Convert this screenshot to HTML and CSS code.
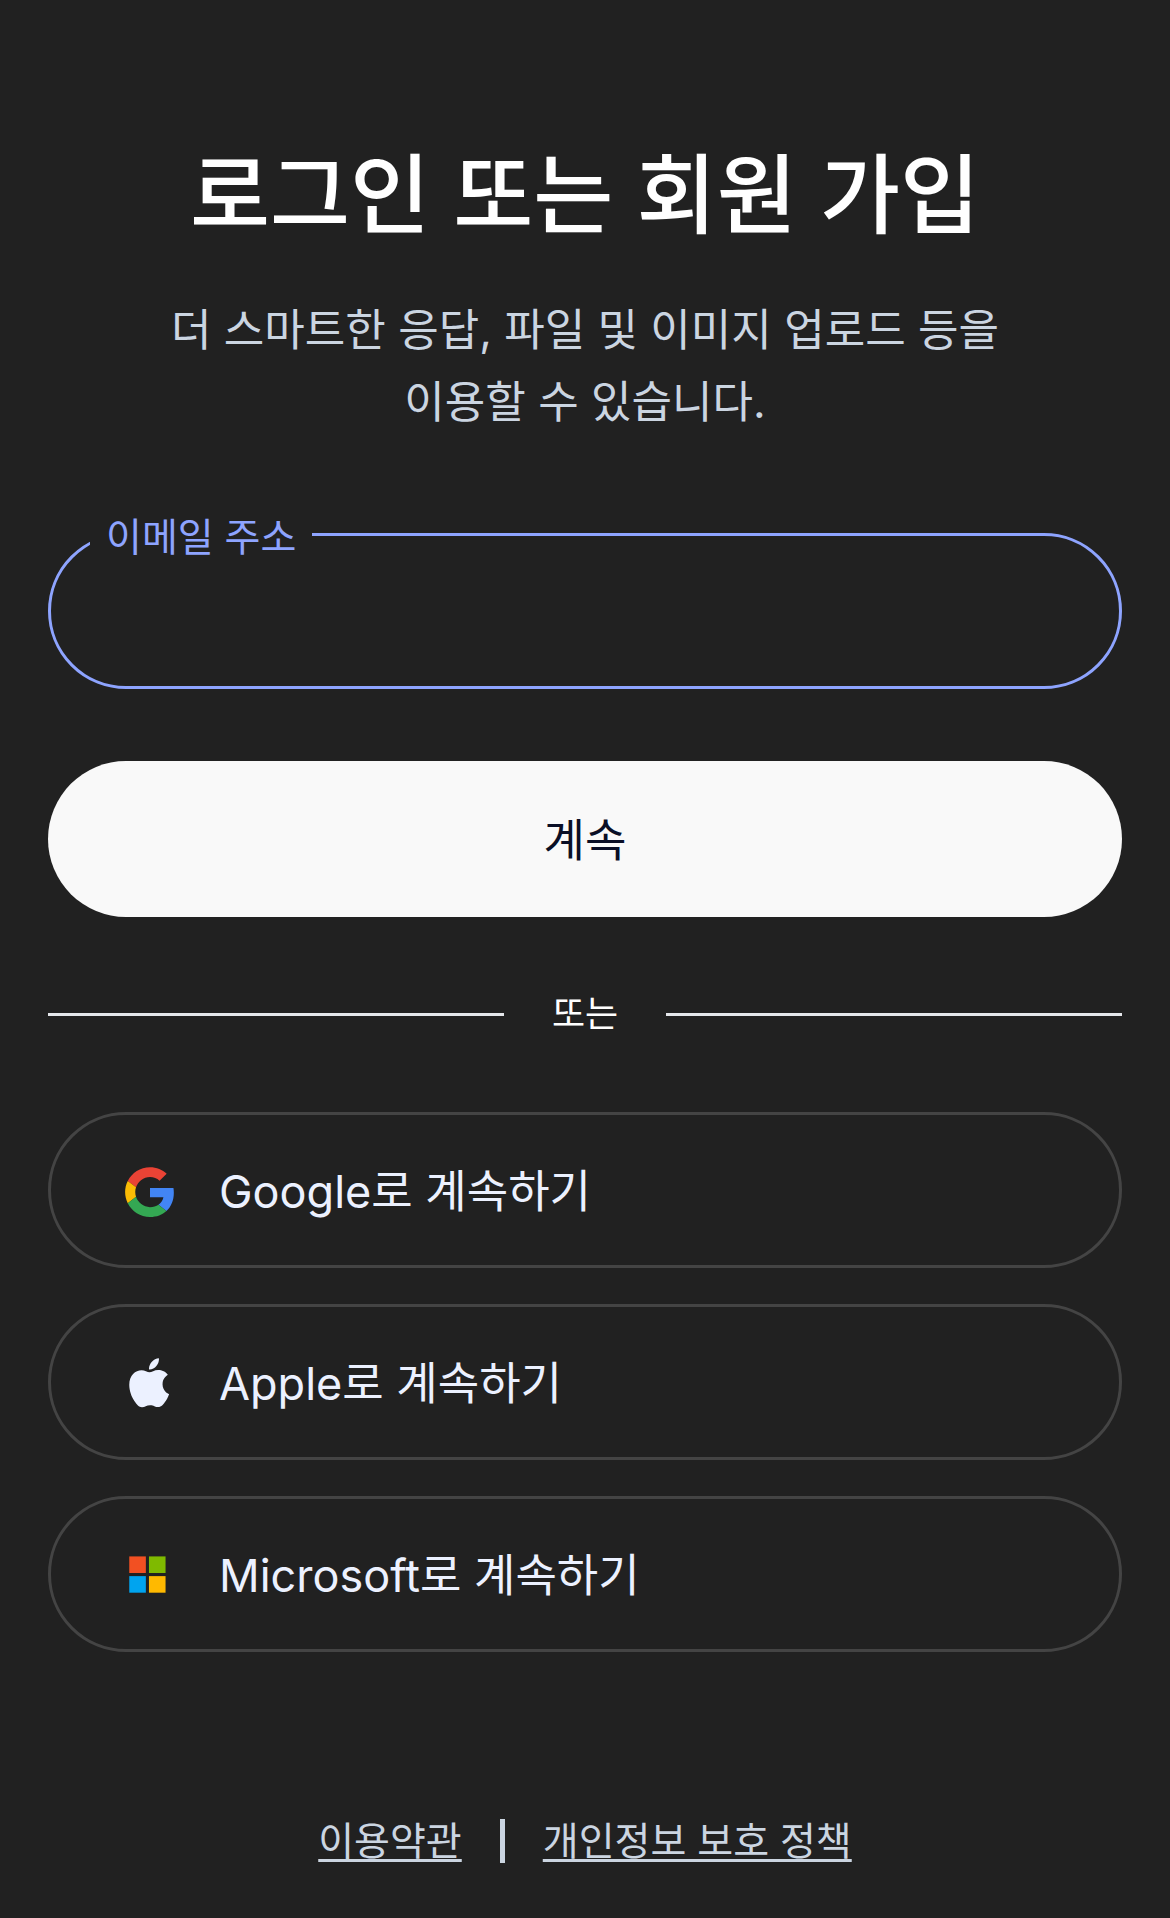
FILE: index.html
```html
<!DOCTYPE html>
<html lang="ko">
<head>
    <meta charset="UTF-8">
    <meta name="viewport" content="width=device-width, initial-scale=1.0">
    <title>로그인 또는 회원 가입</title>
    <link rel="stylesheet" href="styles.css">
</head>
<body>
    <main class="container">
        <h1>로그인 또는 회원 가입</h1>
        <p class="subtitle">더 스마트한 응답, 파일 및 이미지 업로드 등을 이용할 수 있습니다.</p>

        <form class="login-form">
            <div class="field">
                <label for="email">이메일 주소</label>
                <input type="email" id="email" name="email">
            </div>
            <button type="submit" class="btn-primary">계속</button>
        </form>

        <div class="divider"><span>또는</span></div>

        <div class="social">
            <button type="button" class="btn-social">
                <svg class="icon" viewBox="0 -6 48 54" aria-hidden="true">
                    <path fill="#EA4335" d="M24 9.5c3.54 0 6.71 1.22 9.21 3.6l6.85-6.85C35.9 2.38 30.47 0 24 0 14.62 0 6.51 5.38 2.56 13.22l7.98 6.19C12.43 13.72 17.74 9.5 24 9.5z"/>
                    <path fill="#4285F4" d="M46.98 24.55c0-1.57-.15-3.09-.38-4.55H24v9.02h12.94c-.58 2.96-2.26 5.48-4.78 7.18l7.73 6c4.51-4.18 7.09-10.36 7.09-17.65z"/>
                    <path fill="#FBBC05" d="M10.53 28.59c-.48-1.45-.76-2.99-.76-4.59s.27-3.14.76-4.59l-7.98-6.19C.92 16.46 0 20.12 0 24c0 3.88.92 7.54 2.56 10.78l7.97-6.19z"/>
                    <path fill="#34A853" d="M24 48c6.48 0 11.93-2.13 15.89-5.81l-7.73-6c-2.15 1.45-4.92 2.3-8.16 2.3-6.26 0-11.57-4.22-13.47-9.91l-7.98 6.19C6.51 42.62 14.62 48 24 48z"/>
                </svg>
                Google로 계속하기
            </button>
            <button type="button" class="btn-social">
                <svg class="icon" viewBox="0 -6 48 54" aria-hidden="true">
                    <path fill="#ECF1FF" transform="translate(4 -1) scale(.0472)" d="M788.1 340.9c-5.8 4.5-108.2 62.2-108.2 190.5 0 148.4 130.3 200.9 134.2 202.2-.6 3.2-20.7 71.9-68.7 141.9-42.8 61.6-87.5 123.1-155.5 123.1s-85.5-39.5-164-39.5c-76.5 0-103.7 40.8-165.9 40.8s-105.6-57-155.5-127C46.7 790.7 0 663 0 541.8c0-194.4 126.4-297.5 250.8-297.5 66.1 0 121.2 43.4 162.7 43.4 39.5 0 101.1-46 176.3-46 28.5 0 130.9 2.6 198.3 99.2zm-234-181.5c31.1-36.9 53.1-88.1 53.1-139.3 0-7.1-.6-14.3-1.9-20.1-50.6 1.9-110.8 33.7-147.1 75.8-28.5 32.4-55.1 83.6-55.1 135.5 0 7.8 1.3 15.6 1.9 18.1 3.2.6 8.4 1.3 13.6 1.3 45.4 0 102.5-30.4 135.5-71.3z"/>
                </svg>
                Apple로 계속하기
            </button>
            <button type="button" class="btn-social">
                <svg class="icon" viewBox="0 -6 48 54" aria-hidden="true">
                    <path fill="#F25022" d="M4 5h16v16H4z"/>
                    <path fill="#7FBA00" d="M23 5h16v16H23z"/>
                    <path fill="#00A4EF" d="M4 24h16v16H4z"/>
                    <path fill="#FFB900" d="M23 24h16v16H23z"/>
                </svg>
                Microsoft로 계속하기
            </button>
        </div>
    </main>

    <footer class="footer">
        <a href="#">이용약관</a>
        <span class="separator"></span>
        <a href="#">개인정보 보호 정책</a>
    </footer>
</body>
</html>
```

FILE: styles.css
```css
:root {
    --background: #212121;
    --text: #ecf1ff;
    --muted: #cbd5e1;
    --accent: #8ea4ff;
    --border: #444;
}

* {
    box-sizing: border-box;
    font-family: Inter, "Noto Sans CJK KR", sans-serif;
}

body {
    background: var(--background);
    color: var(--text);
    margin: 0;
    padding: 132px 48px 40px;
    min-height: 100vh;
}

h1 {
    color: white;
    text-align: center;
    font-size: 87px;
    font-weight: 500;
    line-height: 128px;
    margin: 0 0 34px;
}

.subtitle {
    color: var(--muted);
    text-align: center;
    font-size: 44px;
    line-height: 72px;
    max-width: 900px;
    margin: 0 auto 95px;
    word-break: keep-all;
}

.login-form {
    display: grid;
    gap: 72px;
}

.field {
    position: relative;
}

.field label {
    position: absolute;
    top: -20px;
    left: 42px;
    padding: 0 16px;
    background: var(--background);
    color: var(--accent);
    font-size: 39px;
    line-height: 48px;
}

.field input {
    display: block;
    width: 100%;
    height: 156px;
    padding: 0 60px;
    border: 3px solid var(--accent);
    border-radius: 78px;
    background: transparent;
    color: var(--text);
    font-size: 45px;
    outline: none;
}

button {
    height: 156px;
    border-radius: 78px;
    font-size: 45px;
    cursor: pointer;
}

.btn-primary {
    padding: 0 0 3px;
    background: #f9f9f9;
    color: #0a0f26;
    border: none;
}

.divider {
    display: flex;
    align-items: center;
    gap: 48px;
    margin: 71px 0 72px;
    color: white;
    font-size: 36px;
    line-height: 52px;
}

.divider::before,
.divider::after {
    content: "";
    flex: 1;
    height: 3px;
    background: #e5e7eb;
}

.social {
    display: grid;
    gap: 36px;
}

.btn-social {
    display: flex;
    align-items: center;
    gap: 44px;
    padding: 0 74px 3px;
    border: 3px solid var(--border);
    background: transparent;
    color: var(--text);
}

.icon {
    width: 50px;
    height: 56px;
}

.footer {
    display: flex;
    justify-content: center;
    align-items: center;
    gap: 38px;
    margin-top: 163px;
    font-size: 39px;
    line-height: 52px;
}

.footer a {
    color: var(--muted);
    text-decoration-thickness: 3px;
    text-decoration-skip-ink: none;
    text-underline-offset: 4px;
}

.separator {
    width: 5px;
    height: 44px;
    background: var(--muted);
}
```
